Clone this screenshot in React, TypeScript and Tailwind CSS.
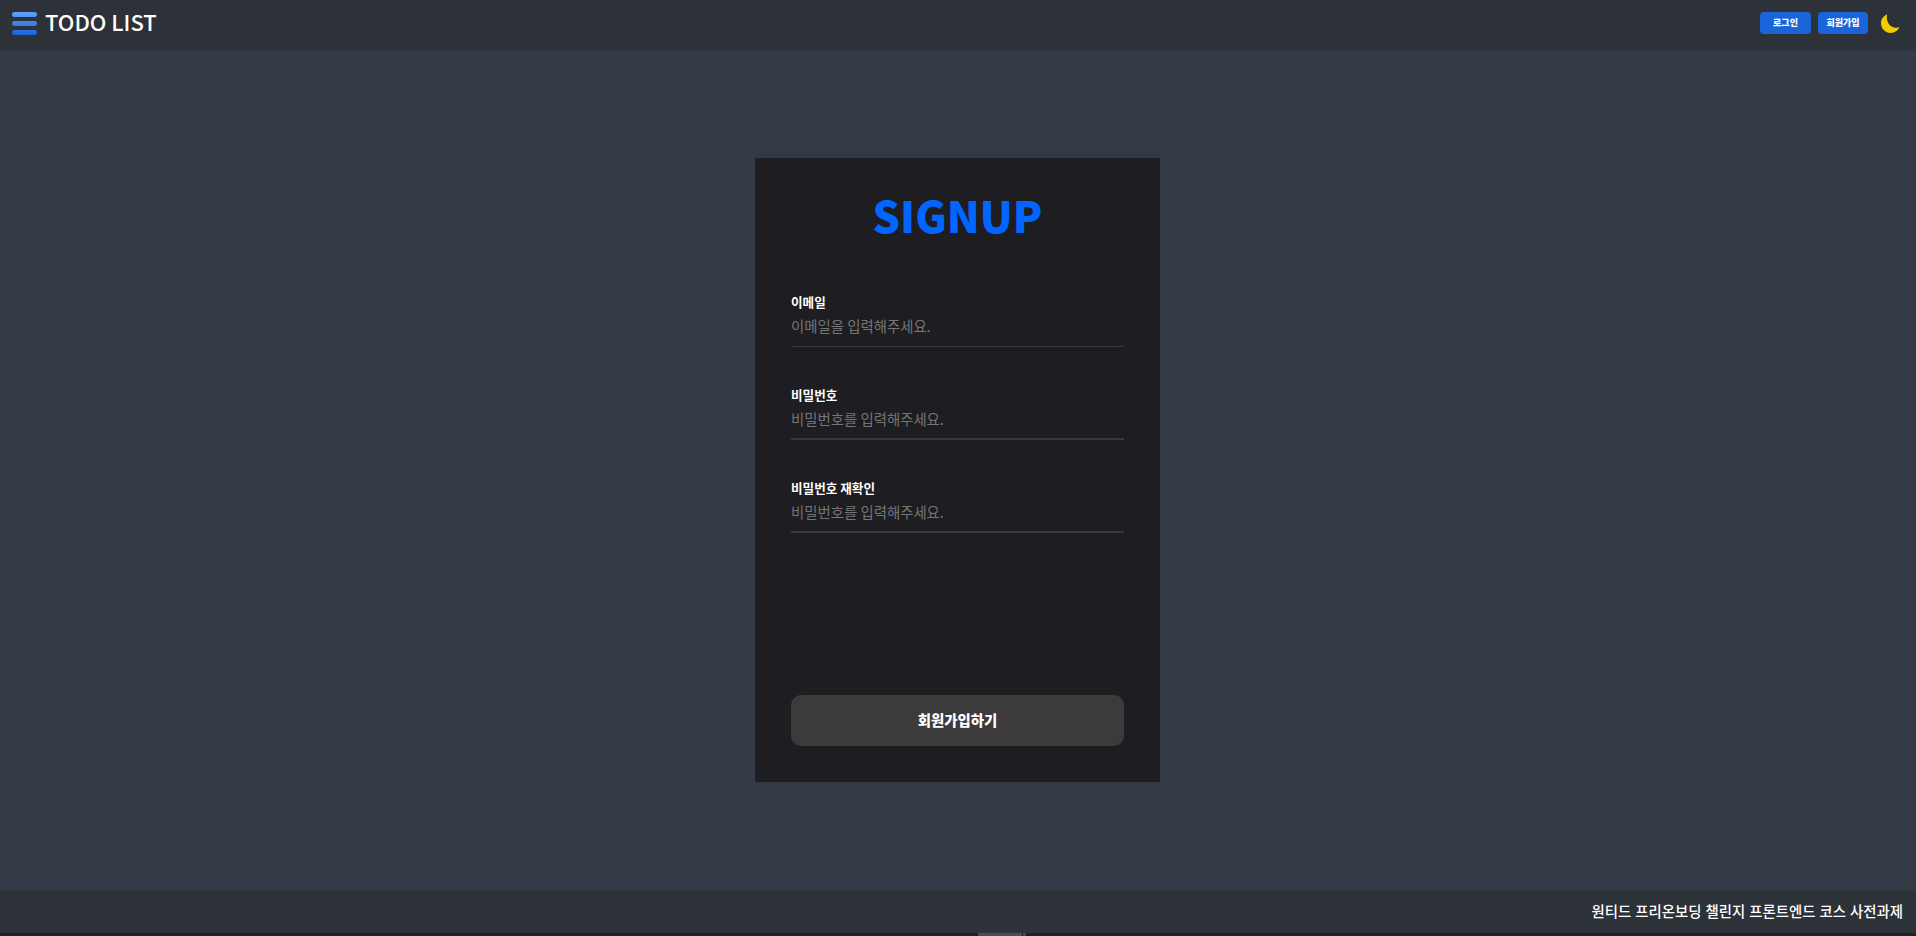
const fields = [
  { label: "이메일", type: "email", hint: "이메일을 입력해주세요.", line: "border-b pb-[7px]" },
  { label: "비밀번호", type: "password", hint: "비밀번호를 입력해주세요.", line: "border-b-2 pb-[6px]" },
  { label: "비밀번호 재확인", type: "password", hint: "비밀번호를 입력해주세요.", line: "border-b-2 pb-[6px]" },
];

function MenuIcon() {
  return (
    <svg width="25" height="23" viewBox="0 0 25 23">
      <defs>
        <linearGradient id="menu" x1="0" y1="0" x2="0" y2="23" gradientUnits="userSpaceOnUse">
          <stop stopColor="#60a0fb" />
          <stop offset="1" stopColor="#1a62d8" />
        </linearGradient>
      </defs>
      <g fill="url(#menu)">
        <rect width="25" height="5" rx="2.5" />
        <rect y="9" width="25" height="5" rx="2.5" />
        <rect y="18" width="25" height="5" rx="2.5" />
      </g>
    </svg>
  );
}

function MoonIcon() {
  return (
    <svg width="19" height="19" viewBox="0 0 19 19" fill="#f0cd00">
      <path d="M6.200 0.200C2.600 1.700 0 5 0 9.200C0 14.600 4.300 18.900 9.700 18.900C13.700 18.900 16.900 16.800 18.300 13.300C10.500 15.500 4.200 8.800 6.200 0.200Z" />
    </svg>
  );
}

export default function App() {
  return (
    <div className="flex h-[936px] flex-col overflow-hidden bg-[#343a45] font-['Noto_Sans_CJK_KR','Noto_Sans',sans-serif] text-white">
      <header className="flex h-[50px] shrink-0 items-start justify-between bg-[#2d3138] pl-3 pr-4 pt-3">
        <div className="flex items-start gap-2">
          <MenuIcon />
          <h1 className="-mt-[3px] text-[22px] font-medium leading-6">TODO LIST</h1>
        </div>
        <div className="flex items-start">
          <button className="h-[22px] w-[51px] rounded bg-[#1b65db] text-[9px] font-black leading-[22px]">로그인</button>
          <button className="ml-[7px] h-[22px] w-[50px] rounded bg-[#1b65db] text-[9px] font-black leading-[22px]">회원가입</button>
          <button className="ml-[13px] mt-[2px]" aria-label="dark">
            <MoonIcon />
          </button>
        </div>
      </header>

      <main className="flex flex-1 justify-center pr-px pt-[108px]">
        <form className="flex h-[624px] w-[405px] flex-col bg-[#1e1d21] px-9 pb-9 pt-6">
          <h2 className="text-center text-[43.2px] font-black leading-[64px] text-[#0066ff]">SIGNUP</h2>
          <div className="mt-12 flex flex-col">
            {fields.map((f) => (
              <label key={f.label} className="flex h-[93px] flex-col">
                <span className="h-[18px] text-[12.6px] font-bold leading-[16px]">{f.label}</span>
                <input
                  type={f.type}
                  placeholder={f.hint}
                  className={"h-[35px] border-[#343a45] bg-transparent text-[14.4px] outline-none placeholder:text-[#757575] " + f.line}
                />
              </label>
            ))}
          </div>
          <button type="button" className="mt-auto h-[51px] rounded-[10px] bg-[#3b3b3b] pb-0.5 text-[14.4px] font-black">
            회원가입하기
          </button>
        </form>
      </main>

      <footer className="flex h-[43px] shrink-0 items-center justify-end bg-[#2d3138] pb-0.5 pr-[13px] text-[14.4px] font-medium [word-spacing:0.8px]">
        원티드 프리온보딩 챌린지 프론트엔드 코스 사전과제
      </footer>
      <div className="flex h-[3px] shrink-0 bg-[#202020] pl-[978px]">
        <div className="w-[44px] bg-[#4d4d4d]" />
        <div className="ml-px w-[3px] bg-[#484848]" />
      </div>
    </div>
  );
}
